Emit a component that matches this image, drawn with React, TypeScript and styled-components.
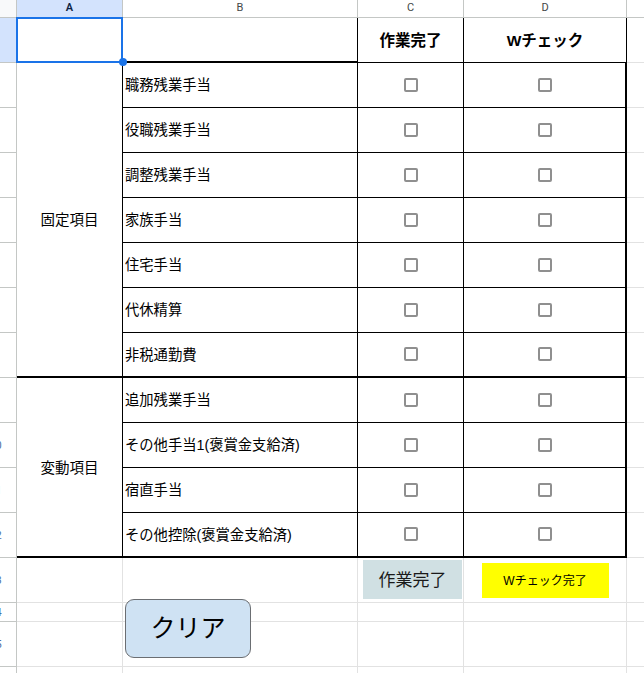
import React from "react";
import styled, { createGlobalStyle } from "styled-components";

const GlobalStyle = createGlobalStyle`
  html, body {
    margin: 0;
    padding: 0;
    background: #ffffff;
    overflow: hidden;
  }
  body {
    font-family: "Liberation Sans", "Noto Sans CJK JP", sans-serif;
  }
`;

type Line = "grid" | "head" | "thin" | "thick" | "none";

const lineCss = (l: Line = "grid") => {
  switch (l) {
    case "grid":
      return "1px solid #e2e2e2";
    case "head":
      return "1px solid #c4c7c5";
    case "thin":
      return "1px solid #000000";
    case "thick":
      return "2px solid #000000";
    default:
      return "0";
  }
};

const Sheet = styled.div`
  position: relative;
  display: grid;
  grid-template-columns: 17px 106px 235px 106px 163px 17px;
  grid-template-rows: 18px repeat(13, 45px) 19px 45px 45px;
  width: 644px;
  font-family: "Liberation Sans", "Noto Sans CJK JP", sans-serif;
  color: #000;
`;

const Corner = styled.div`
  box-sizing: border-box;
  background: #f8f9fa;
  border-right: 1px solid #c4c7c5;
  border-bottom: 1px solid #c4c7c5;
`;

const ColHead = styled.div<{ $sel?: boolean; $last?: boolean }>`
  box-sizing: border-box;
  display: flex;
  align-items: center;
  justify-content: center;
  padding-bottom: 2px;
  background: ${(p) => (p.$sel ? "#d3e3fd" : "#ffffff")};
  border-right: ${(p) => (p.$last ? "0" : "1px solid #c4c7c5")};
  border-bottom: 1px solid #c4c7c5;
  font-family: Roboto, "Liberation Sans", sans-serif;
  font-size: 11px;
  font-weight: ${(p) => (p.$sel ? 600 : 400)};
  color: ${(p) => (p.$sel ? "#0b1f44" : "#444746")};
`;

const RowHead = styled.div<{ $sel?: boolean }>`
  box-sizing: border-box;
  display: flex;
  align-items: center;
  justify-content: center;
  overflow: hidden;
  background: ${(p) => (p.$sel ? "#d3e3fd" : "#ffffff")};
  border-right: 1px solid #c4c7c5;
  border-bottom: 1px solid #c4c7c5;
`;

const RowNum = styled.span`
  flex: none;
  margin-right: 25px;
  font-family: Roboto, "Liberation Sans", sans-serif;
  font-size: 11px;
  color: #4a6fa5;
  white-space: nowrap;
`;

const Cell = styled.div<{ $r?: Line; $b?: Line; $span?: number }>`
  box-sizing: border-box;
  min-width: 0;
  display: flex;
  align-items: center;
  justify-content: center;
  background: #ffffff;
  border-right: ${(p) => lineCss(p.$r)};
  border-bottom: ${(p) => lineCss(p.$b)};
  ${(p) => (p.$span ? `grid-row: span ${p.$span};` : "")}
`;

const SelectedCell = styled(Cell)`
  position: relative;
`;

const Selection = styled.div`
  position: absolute;
  top: -1px;
  left: -1px;
  right: -1px;
  bottom: -1px;
  border: 2px solid #1a73e8;
  z-index: 2;
  pointer-events: none;
`;

const Handle = styled.div`
  position: absolute;
  right: -5px;
  bottom: -4px;
  width: 8px;
  height: 8px;
  border-radius: 50%;
  background: #1a73e8;
  z-index: 3;
`;

const TitleCell = styled(Cell)`
  font-size: 15.5px;
  font-weight: 700;
  padding-bottom: 2px;
`;

const GroupCell = styled(Cell)`
  font-size: 14.5px;
  padding-bottom: 2px;
`;

const ItemCell = styled(Cell)`
  justify-content: flex-start;
  padding-left: 2px;
  padding-bottom: 3px;
  font-size: 14.3px;
  white-space: nowrap;
`;

const Checkbox = styled.span`
  box-sizing: border-box;
  display: block;
  width: 14px;
  height: 14px;
  border: 2px solid #8f8f8f;
  border-radius: 2px;
  background: #ffffff;
  margin-bottom: 1px;
`;

const WorkDoneBtn = styled.div`
  width: 99px;
  height: 39px;
  margin-left: 4px;
  margin-bottom: 1px;
  padding-bottom: 2px;
  box-sizing: border-box;
  display: flex;
  align-items: center;
  justify-content: center;
  background: #d0e0e3;
  font-size: 17px;
  color: #1a1a1a;
`;

const WCheckBtn = styled.div`
  width: 127px;
  height: 35px;
  padding-bottom: 1px;
  box-sizing: border-box;
  display: flex;
  align-items: center;
  justify-content: center;
  background: #ffff00;
  font-size: 12px;
  color: #000;
`;

const ClearBtn = styled.div`
  position: absolute;
  left: 125px;
  top: 599px;
  box-sizing: border-box;
  width: 126px;
  height: 59px;
  padding-bottom: 5px;
  display: flex;
  align-items: center;
  justify-content: center;
  background: #cfe2f3;
  border: 1px solid #6b6e72;
  border-radius: 9px;
  font-size: 25px;
  color: #000;
  z-index: 4;
`;

type Row = { label: string; group?: { name: string; span: number }; last: boolean };

const fixed = ["職務残業手当", "役職残業手当", "調整残業手当", "家族手当", "住宅手当", "代休精算", "非税通勤費"];
const variable = ["追加残業手当", "その他手当1(褒賞金支給済)", "宿直手当", "その他控除(褒賞金支給済)"];

const rows: Row[] = [
  ...fixed.map((label, i) => ({
    label,
    group: i === 0 ? { name: "固定項目", span: fixed.length } : undefined,
    last: i === fixed.length - 1,
  })),
  ...variable.map((label, i) => ({
    label,
    group: i === 0 ? { name: "変動項目", span: variable.length } : undefined,
    last: i === variable.length - 1,
  })),
];

export default function App() {
  return (
    <>
      <GlobalStyle />
      <Sheet>
        <Corner />
        <ColHead $sel>A</ColHead>
        <ColHead>B</ColHead>
        <ColHead>C</ColHead>
        <ColHead>D</ColHead>
        <ColHead $last />

        <RowHead $sel>
          <RowNum>1</RowNum>
        </RowHead>
        <SelectedCell $r="grid" $b="grid">
          <Selection />
          <Handle />
        </SelectedCell>
        <Cell $r="thin" $b="thick" />
        <TitleCell $r="thin" $b="thin">作業完了</TitleCell>
        <TitleCell $r="thin" $b="thin">Wチェック</TitleCell>
        <Cell $r="none" $b="grid" />

        {rows.map((row, i) => {
          const b: Line = row.last ? "thick" : "thin";
          return (
            <React.Fragment key={row.label}>
              <RowHead>
                <RowNum>{i + 2}</RowNum>
              </RowHead>
              {row.group && (
                <GroupCell $r="thin" $b="thick" $span={row.group.span}>
                  {row.group.name}
                </GroupCell>
              )}
              <ItemCell $r="thin" $b={b}>
                {row.label}
              </ItemCell>
              <Cell $r="thin" $b={b}>
                <Checkbox />
              </Cell>
              <Cell $r="thick" $b={b}>
                <Checkbox />
              </Cell>
              <Cell $r="none" $b="grid" />
            </React.Fragment>
          );
        })}

        <RowHead>
          <RowNum>13</RowNum>
        </RowHead>
        <Cell />
        <Cell />
        <Cell>
          <WorkDoneBtn>作業完了</WorkDoneBtn>
        </Cell>
        <Cell>
          <WCheckBtn>Wチェック完了</WCheckBtn>
        </Cell>
        <Cell $r="none" />

        {[14, 15, 16].map((n) => (
          <React.Fragment key={n}>
            <RowHead>
              <RowNum>{n}</RowNum>
            </RowHead>
            <Cell />
            <Cell />
            <Cell />
            <Cell />
            <Cell $r="none" />
          </React.Fragment>
        ))}

        <ClearBtn>クリア</ClearBtn>
      </Sheet>
    </>
  );
}
